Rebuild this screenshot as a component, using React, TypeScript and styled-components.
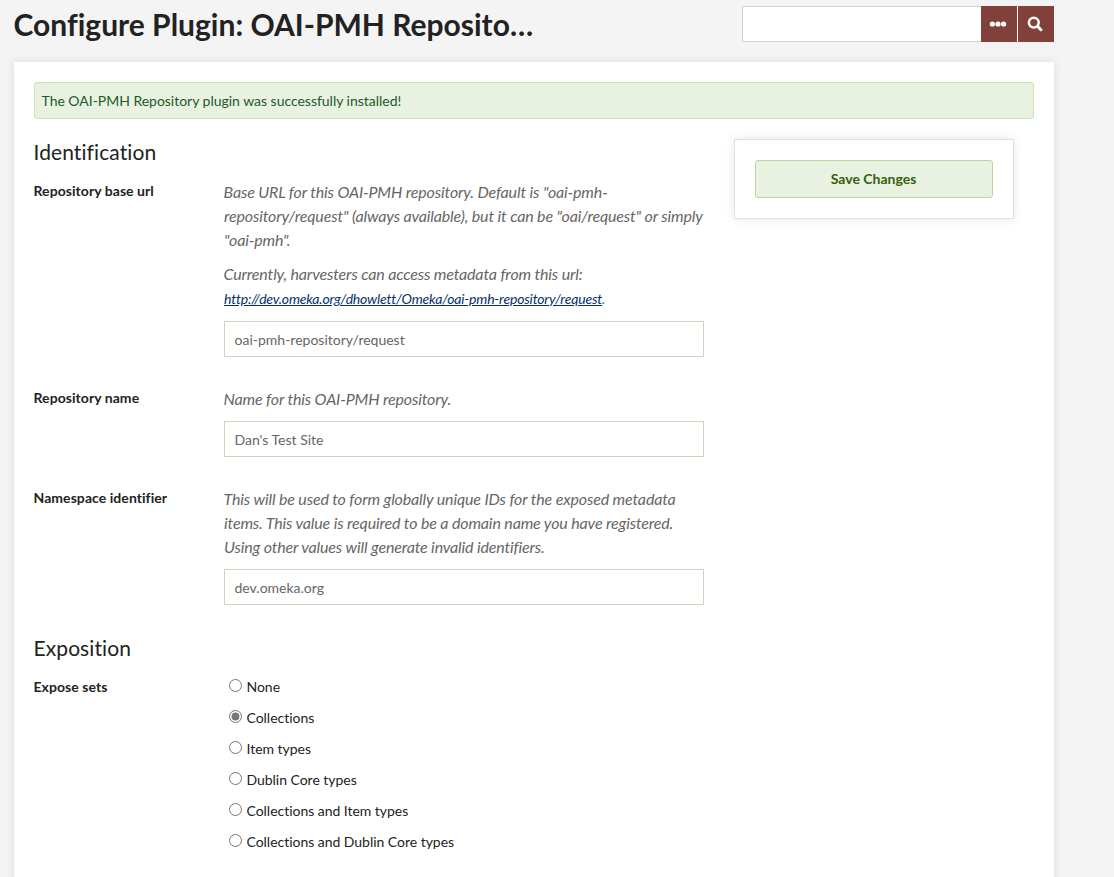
import React from "react";
import styled, { createGlobalStyle } from "styled-components";

const GlobalStyle = createGlobalStyle`
  *, *::before, *::after { box-sizing: border-box; }
  html { background: #f4f4f4; }
  body {
    margin: 0;
    background: #f4f4f4;
    color: #222;
    font: 14px/21px Lato, "Liberation Sans", sans-serif;
    font-variant-ligatures: none;
    text-indent: -0.5px;
    overflow: hidden;
  }
`;

const Page = styled.div`
  display: flex;
  flex-direction: column;
  width: 1040px;
  height: 877px;
  margin-left: 14px;
`;

const Header = styled.header`
  display: flex;
  flex: none;
  justify-content: space-between;
  height: 62px;
  padding-top: 6px;
`;

const Title = styled.h1`
  width: 524px;
  margin: 0;
  font-size: 30px;
  line-height: 36px;
  font-weight: 700;
  white-space: nowrap;
  overflow: hidden;
  text-overflow: ellipsis;
`;

const Search = styled.form`
  display: flex;
  width: 312px;
  height: 36px;
`;

const SearchInput = styled.input`
  flex: 1;
  min-width: 0;
  border: 1px solid #d3d4be;
  border-right: 0;
  background: #fff;
  padding: 0 10px;
  font: inherit;
`;

const SearchButton = styled.button<{ $divided?: boolean }>`
  display: flex;
  align-items: center;
  justify-content: center;
  width: ${(p) => (p.$divided ? 37 : 36)}px;
  border: 0;
  border-left: ${(p) => (p.$divided ? "1px solid #fff" : "0")};
  padding: 0 2px 0 0;
  background: #81403a;
  color: #fff;
`;

const Content = styled.main`
  flex: 1;
  padding: 20px;
  background: #fff;
  box-shadow: 0 0 10px rgba(0, 0, 0, 0.1);
`;

const Notice = styled.div`
  height: 37px;
  padding: 8px 7px;
  line-height: 20px;
  letter-spacing: -0.02px;
  border: 1px solid #cde3b7;
  border-radius: 3px;
  background: #e9f2e1;
  color: #1c5a2a;
`;

const Columns = styled.div`
  display: flex;
  align-items: flex-start;
  gap: 30px;
  margin-top: 20px;
`;

const Fields = styled.div`
  width: 670px;
`;

const SectionTitle = styled.h2`
  margin: 0 0 15px;
  font-size: 21px;
  line-height: 26px;
  font-weight: 400;
  letter-spacing: 0.09px;
`;

const Field = styled.div`
  display: grid;
  grid-template-columns: 190px 480px;
  margin-bottom: 30px;
`;

const FieldLabel = styled.label`
  font-weight: 700;
  line-height: 22px;
  letter-spacing: 0.06px;
`;

const Explanation = styled.p`
  margin: 0 0 10px;
  font-size: 16px;
  line-height: 24px;
  font-style: italic;
  letter-spacing: -0.15px;
  color: #666;
`;

const UrlLine = styled.span`
  font-size: 14px;
  letter-spacing: -0.19px;
`;

const UrlLink = styled.a`
  color: #05306b;
  text-decoration: underline;
`;

const TextInput = styled.input`
  display: block;
  width: 480px;
  height: 36px;
  padding: 0 10px;
  border: 1px solid #d3d4be;
  background: #fff;
  color: #666;
  font: inherit;
  font-variant-ligatures: none;
  text-indent: -0.5px;
`;

const Options = styled.div`
  display: flex;
  flex-direction: column;
  gap: 10px;
`;

const Option = styled.label`
  display: flex;
  align-items: flex-start;
  height: 21px;
  line-height: 22px;
  letter-spacing: -0.03px;
`;

const Radio = styled.input`
  width: 13px;
  height: 13px;
  margin: 3px 5px 0;
  accent-color: #767676;
`;

const SavePanel = styled.aside`
  width: 280px;
  height: 80px;
  padding: 20px;
  border: 1px solid #e2e2dd;
  background: #fff;
  box-shadow: 0 0 10px rgba(0, 0, 0, 0.1);
`;

const SaveButton = styled.button`
  width: 100%;
  height: 38px;
  border: 1px solid #bad4a2;
  border-radius: 3px;
  background: #e9f2e1;
  color: #36600e;
  font: inherit;
  font-weight: 700;
  padding: 0 0 2px;
`;

const exposeOptions = [
  "None",
  "Collections",
  "Item types",
  "Dublin Core types",
  "Collections and Item types",
  "Collections and Dublin Core types",
];

const EllipsisIcon = () => (
  <svg width="18" height="8" viewBox="0 0 18 8" fill="currentColor">
    <circle cx="3.4" cy="4" r="2.6" />
    <circle cx="9" cy="4" r="2.6" />
    <circle cx="14.6" cy="4" r="2.6" />
  </svg>
);

const SearchIcon = () => (
  <svg width="16" height="16" viewBox="0 0 16 16" fill="none" stroke="currentColor">
    <circle cx="6.8" cy="6.6" r="4.9" strokeWidth="2.5" />
    <path d="M10.5 10.3 L13.9 13.7" strokeWidth="3" strokeLinecap="round" />
  </svg>
);

export default function App() {
  return (
    <>
      <GlobalStyle />
      <Page>
        <Header>
          <Title>Configure Plugin: OAI-PMH Reposito…</Title>
          <Search>
            <SearchInput aria-label="Search" />
            <SearchButton type="button" aria-label="Search options">
              <EllipsisIcon />
            </SearchButton>
            <SearchButton type="button" $divided aria-label="Submit search">
              <SearchIcon />
            </SearchButton>
          </Search>
        </Header>
        <Content>
          <Notice>The OAI-PMH Repository plugin was successfully installed!</Notice>
          <Columns>
            <Fields>
              <SectionTitle>Identification</SectionTitle>
              <Field>
                <FieldLabel>Repository base url</FieldLabel>
                <div>
                  <Explanation>
                    Base URL for this OAI-PMH repository. Default is "oai-pmh-repository/request"
                    (always available), but it can be "oai/request" or simply "oai-pmh".
                  </Explanation>
                  <Explanation>
                    Currently, harvesters can access metadata from this url:
                    <br />
                    <UrlLine>
                      <UrlLink>http://dev.omeka.org/dhowlett/Omeka/oai-pmh-repository/request</UrlLink>.
                    </UrlLine>
                  </Explanation>
                  <TextInput defaultValue="oai-pmh-repository/request" />
                </div>
              </Field>
              <Field>
                <FieldLabel>Repository name</FieldLabel>
                <div>
                  <Explanation>Name for this OAI-PMH repository.</Explanation>
                  <TextInput defaultValue="Dan's Test Site" />
                </div>
              </Field>
              <Field>
                <FieldLabel>Namespace identifier</FieldLabel>
                <div>
                  <Explanation>
                    This will be used to form globally unique IDs for the exposed metadata items.
                    This value is required to be a domain name you have registered. Using other
                    values will generate invalid identifiers.
                  </Explanation>
                  <TextInput defaultValue="dev.omeka.org" />
                </div>
              </Field>
              <SectionTitle>Exposition</SectionTitle>
              <Field>
                <FieldLabel>Expose sets</FieldLabel>
                <Options>
                  {exposeOptions.map((name) => (
                    <Option key={name}>
                      <Radio type="radio" name="expose" defaultChecked={name === "Collections"} />
                      {name}
                    </Option>
                  ))}
                </Options>
              </Field>
            </Fields>
            <SavePanel>
              <SaveButton type="button">Save Changes</SaveButton>
            </SavePanel>
          </Columns>
        </Content>
      </Page>
    </>
  );
}
